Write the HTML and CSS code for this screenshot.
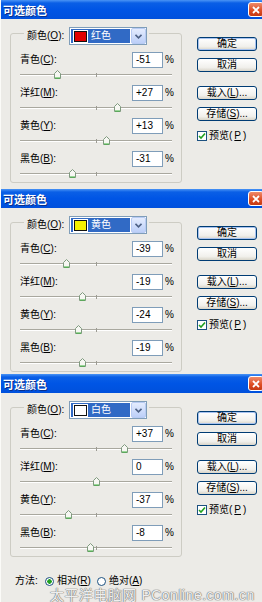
FILE: index.html
```html
<!DOCTYPE html>
<html lang="zh-CN">
<head>
    <meta charset="UTF-8">
    <title>可选颜色</title>
    <link rel="stylesheet" href="styles.css">
</head>
<body>
    <!-- 红色 -->
    <div class="dlg dlg-a">
        <div class="title"><span>可选颜色</span><span class="close"><svg width="8" height="8" viewBox="0 0 8 8"><path d="M1 1 L7 7 M7 1 L1 7" stroke="#fff" stroke-width="1.8"/></svg></span></div>
        <div class="body">
            <fieldset class="group">
                <legend class="pick">
                    <span class="pick-lbl">颜色(<u>O</u>):</span>
                    <span class="select"><span class="cur"><i class="swatch red"></i>红色</span><span class="arrow"><svg width="7" height="5" viewBox="0 0 7 5"><path d="M0.5 0.8 L3.5 3.8 L6.5 0.8" fill="none" stroke="#4d6185" stroke-width="1.6"/></svg></span></span>
                </legend>
                <div class="rows">
                    <div class="row">
                        <div class="line"><span class="lbl">青色(<u>C</u>):</span><span class="num">-51</span><span class="pct">%</span></div>
                        <div class="slider"><div class="track"></div><i class="tick tick-mid"></i><svg class="thumb" style="left:37px" width="7" height="9" viewBox="0 0 7 9"><path d="M0.5 3.5 L3.5 0.5 L6.5 3.5 V8.5 H0.5 Z" fill="#f7f7f3" stroke="#7f9a7f"/><path d="M1 8 H6" stroke="#3cb33c"/></svg></div>
                    </div>
                    <div class="row">
                        <div class="line"><span class="lbl">洋红(<u>M</u>):</span><span class="num">+27</span><span class="pct">%</span></div>
                        <div class="slider"><div class="track"></div><i class="tick tick-mid"></i><svg class="thumb" style="left:97px" width="7" height="9" viewBox="0 0 7 9"><path d="M0.5 3.5 L3.5 0.5 L6.5 3.5 V8.5 H0.5 Z" fill="#f7f7f3" stroke="#7f9a7f"/><path d="M1 8 H6" stroke="#3cb33c"/></svg></div>
                    </div>
                    <div class="row">
                        <div class="line"><span class="lbl">黄色(<u>Y</u>):</span><span class="num">+13</span><span class="pct">%</span></div>
                        <div class="slider"><div class="track"></div><i class="tick tick-mid"></i><svg class="thumb" style="left:86px" width="7" height="9" viewBox="0 0 7 9"><path d="M0.5 3.5 L3.5 0.5 L6.5 3.5 V8.5 H0.5 Z" fill="#f7f7f3" stroke="#7f9a7f"/><path d="M1 8 H6" stroke="#3cb33c"/></svg></div>
                    </div>
                    <div class="row">
                        <div class="line"><span class="lbl">黑色(<u>B</u>):</span><span class="num">-31</span><span class="pct">%</span></div>
                        <div class="slider"><div class="track"></div><i class="tick tick-mid"></i><svg class="thumb" style="left:52px" width="7" height="9" viewBox="0 0 7 9"><path d="M0.5 3.5 L3.5 0.5 L6.5 3.5 V8.5 H0.5 Z" fill="#f7f7f3" stroke="#7f9a7f"/><path d="M1 8 H6" stroke="#3cb33c"/></svg></div>
                    </div>
                </div>
            </fieldset>
            <div class="side">
                <button class="btn btn-ok">确定</button>
                <button class="btn">取消</button>
                <button class="btn btn-gap">载入(<u>L</u>)...</button>
                <button class="btn">存储(<u>S</u>)...</button>
                <label class="check"><span class="box"><svg width="8" height="8" viewBox="0 0 8 8"><path d="M1 4 L3 6 L7 1.5" fill="none" stroke="#21a121" stroke-width="1.6"/></svg></span>预览(<u>P</u>)</label>
            </div>
        </div>
    </div>

    <!-- 黄色 -->
    <div class="dlg dlg-b">
        <div class="title"><span>可选颜色</span><span class="close"><svg width="8" height="8" viewBox="0 0 8 8"><path d="M1 1 L7 7 M7 1 L1 7" stroke="#fff" stroke-width="1.8"/></svg></span></div>
        <div class="body">
            <fieldset class="group">
                <legend class="pick">
                    <span class="pick-lbl">颜色(<u>O</u>):</span>
                    <span class="select"><span class="cur"><i class="swatch yellow"></i>黄色</span><span class="arrow"><svg width="7" height="5" viewBox="0 0 7 5"><path d="M0.5 0.8 L3.5 3.8 L6.5 0.8" fill="none" stroke="#4d6185" stroke-width="1.6"/></svg></span></span>
                </legend>
                <div class="rows">
                    <div class="row">
                        <div class="line"><span class="lbl">青色(<u>C</u>):</span><span class="num">-39</span><span class="pct">%</span></div>
                        <div class="slider"><div class="track"></div><i class="tick tick-mid"></i><svg class="thumb" style="left:46px" width="7" height="9" viewBox="0 0 7 9"><path d="M0.5 3.5 L3.5 0.5 L6.5 3.5 V8.5 H0.5 Z" fill="#f7f7f3" stroke="#7f9a7f"/><path d="M1 8 H6" stroke="#3cb33c"/></svg></div>
                    </div>
                    <div class="row">
                        <div class="line"><span class="lbl">洋红(<u>M</u>):</span><span class="num">-19</span><span class="pct">%</span></div>
                        <div class="slider"><div class="track"></div><i class="tick tick-mid"></i><svg class="thumb" style="left:62px" width="7" height="9" viewBox="0 0 7 9"><path d="M0.5 3.5 L3.5 0.5 L6.5 3.5 V8.5 H0.5 Z" fill="#f7f7f3" stroke="#7f9a7f"/><path d="M1 8 H6" stroke="#3cb33c"/></svg></div>
                    </div>
                    <div class="row">
                        <div class="line"><span class="lbl">黄色(<u>Y</u>):</span><span class="num">-24</span><span class="pct">%</span></div>
                        <div class="slider"><div class="track"></div><i class="tick tick-mid"></i><svg class="thumb" style="left:58px" width="7" height="9" viewBox="0 0 7 9"><path d="M0.5 3.5 L3.5 0.5 L6.5 3.5 V8.5 H0.5 Z" fill="#f7f7f3" stroke="#7f9a7f"/><path d="M1 8 H6" stroke="#3cb33c"/></svg></div>
                    </div>
                    <div class="row">
                        <div class="line"><span class="lbl">黑色(<u>B</u>):</span><span class="num">-19</span><span class="pct">%</span></div>
                        <div class="slider"><div class="track"></div><i class="tick tick-mid"></i><svg class="thumb" style="left:62px" width="7" height="9" viewBox="0 0 7 9"><path d="M0.5 3.5 L3.5 0.5 L6.5 3.5 V8.5 H0.5 Z" fill="#f7f7f3" stroke="#7f9a7f"/><path d="M1 8 H6" stroke="#3cb33c"/></svg></div>
                    </div>
                </div>
            </fieldset>
            <div class="side">
                <button class="btn btn-ok">确定</button>
                <button class="btn">取消</button>
                <button class="btn btn-gap">载入(<u>L</u>)...</button>
                <button class="btn">存储(<u>S</u>)...</button>
                <label class="check"><span class="box"><svg width="8" height="8" viewBox="0 0 8 8"><path d="M1 4 L3 6 L7 1.5" fill="none" stroke="#21a121" stroke-width="1.6"/></svg></span>预览(<u>P</u>)</label>
            </div>
        </div>
    </div>

    <!-- 白色 -->
    <div class="dlg dlg-c">
        <div class="title"><span>可选颜色</span><span class="close"><svg width="8" height="8" viewBox="0 0 8 8"><path d="M1 1 L7 7 M7 1 L1 7" stroke="#fff" stroke-width="1.8"/></svg></span></div>
        <div class="body">
            <fieldset class="group">
                <legend class="pick">
                    <span class="pick-lbl">颜色(<u>O</u>):</span>
                    <span class="select"><span class="cur"><i class="swatch white"></i>白色</span><span class="arrow"><svg width="7" height="5" viewBox="0 0 7 5"><path d="M0.5 0.8 L3.5 3.8 L6.5 0.8" fill="none" stroke="#4d6185" stroke-width="1.6"/></svg></span></span>
                </legend>
                <div class="rows">
                    <div class="row">
                        <div class="line"><span class="lbl">青色(<u>C</u>):</span><span class="num">+37</span><span class="pct">%</span></div>
                        <div class="slider"><div class="track"></div><i class="tick tick-mid"></i><svg class="thumb" style="left:104px" width="7" height="9" viewBox="0 0 7 9"><path d="M0.5 3.5 L3.5 0.5 L6.5 3.5 V8.5 H0.5 Z" fill="#f7f7f3" stroke="#7f9a7f"/><path d="M1 8 H6" stroke="#3cb33c"/></svg></div>
                    </div>
                    <div class="row">
                        <div class="line"><span class="lbl">洋红(<u>M</u>):</span><span class="num">0</span><span class="pct">%</span></div>
                        <div class="slider"><div class="track"></div><i class="tick tick-mid"></i><svg class="thumb" style="left:76px" width="7" height="9" viewBox="0 0 7 9"><path d="M0.5 3.5 L3.5 0.5 L6.5 3.5 V8.5 H0.5 Z" fill="#f7f7f3" stroke="#7f9a7f"/><path d="M1 8 H6" stroke="#3cb33c"/></svg></div>
                    </div>
                    <div class="row">
                        <div class="line"><span class="lbl">黄色(<u>Y</u>):</span><span class="num">-37</span><span class="pct">%</span></div>
                        <div class="slider"><div class="track"></div><i class="tick tick-mid"></i><svg class="thumb" style="left:48px" width="7" height="9" viewBox="0 0 7 9"><path d="M0.5 3.5 L3.5 0.5 L6.5 3.5 V8.5 H0.5 Z" fill="#f7f7f3" stroke="#7f9a7f"/><path d="M1 8 H6" stroke="#3cb33c"/></svg></div>
                    </div>
                    <div class="row">
                        <div class="line"><span class="lbl">黑色(<u>B</u>):</span><span class="num">-8</span><span class="pct">%</span></div>
                        <div class="slider"><div class="track"></div><i class="tick tick-mid"></i><svg class="thumb" style="left:70px" width="7" height="9" viewBox="0 0 7 9"><path d="M0.5 3.5 L3.5 0.5 L6.5 3.5 V8.5 H0.5 Z" fill="#f7f7f3" stroke="#7f9a7f"/><path d="M1 8 H6" stroke="#3cb33c"/></svg></div>
                    </div>
                </div>
            </fieldset>
            <div class="side">
                <button class="btn btn-ok">确定</button>
                <button class="btn">取消</button>
                <button class="btn btn-gap">载入(<u>L</u>)...</button>
                <button class="btn">存储(<u>S</u>)...</button>
                <label class="check"><span class="box"><svg width="8" height="8" viewBox="0 0 8 8"><path d="M1 4 L3 6 L7 1.5" fill="none" stroke="#21a121" stroke-width="1.6"/></svg></span>预览(<u>P</u>)</label>
            </div>
        </div>
        <div class="method">
            <span class="method-lbl">方法:</span>
            <span class="radio on"></span><span class="opt">相对(<u>R</u>)</span>
            <span class="radio"></span><span class="opt">绝对(<u>A</u>)</span>
        </div>
        <div class="mark">太平洋电脑网 PConline.com.cn</div>
    </div>
</body>
</html>
```

FILE: styles.css
```css
* {
    margin: 0;
    padding: 0;
    box-sizing: border-box;
}

body {
    width: 262px;
    height: 602px;
    overflow: hidden;
    background-color: #ecebe7;
    font-family: "Liberation Sans", "Noto Sans CJK SC", sans-serif;
    font-size: 10px;
    line-height: 12px;
    color: #000;
}

u {
    text-decoration: underline;
    text-underline-offset: 1px;
}

.dlg {
    width: 262px;
    overflow: hidden;
    background-color: #ecebe7;
    border-left: 1px solid #fbfbf8;
}

.dlg-a {
    height: 189px;
}

.dlg-b {
    height: 185px;
}

.dlg-c {
    height: 228px;
}

/* title bar */
.title {
    height: 19px;
    display: flex;
    align-items: center;
    justify-content: space-between;
    padding-left: 2px;
    background: linear-gradient(#4a94f5 0, #0a5fe6 3px, #0055e5 50%, #0050dc 100%);
    color: #fff;
    font-family: "Noto Sans CJK SC", sans-serif;
    font-size: 11px;
    font-weight: bold;
    text-shadow: 1px 1px 0 #0a2f8a;
}

.close {
    width: 16px;
    height: 15px;
    margin-right: -2px;
    display: flex;
    align-items: center;
    justify-content: center;
    border: 1px solid #fff;
    border-radius: 3px;
    background: linear-gradient(#ef8a6a, #dd4b22 60%, #c43a14);
}

/* body */
.body {
    display: flex;
    padding: 2px 0 0 9px;
}

.group {
    width: 172px;
    min-inline-size: 0;
    border: 1px solid #cdccc4;
    border-radius: 3px;
}

.pick {
    display: flex;
    align-items: center;
    margin-left: 13px;
    padding: 6px 2px 0 3px;
}

.pick-lbl {
    width: 42px;
}

.select {
    display: flex;
    width: 78px;
    height: 18px;
    border: 1px solid #7f9db9;
    background-color: #fff;
}

.cur {
    flex: 1;
    display: flex;
    align-items: center;
    gap: 4px;
    margin: 1px;
    padding-left: 3px;
    background-color: #316ac5;
    color: #fff;
}

.swatch {
    width: 13px;
    height: 11px;
    border: 1px solid #111;
    box-shadow: 0 0 0 1px #fff;
}

.red {
    background-color: #e10000;
}

.yellow {
    background-color: #f5f000;
}

.white {
    background-color: #fff;
}

.arrow {
    width: 15px;
    display: flex;
    align-items: center;
    justify-content: center;
    border: 1px solid #b8cbf3;
    border-radius: 2px;
    background: linear-gradient(#e4ecfe, #bccff8);
}

/* sliders */
.rows {
    padding-top: 7px;
}

.row {
    padding: 0 8px 0 9px;
}

.row + .row {
    margin-top: 2px;
}

.line {
    display: flex;
    align-items: center;
    height: 16px;
}

.lbl {
    flex: 1;
}

.num {
    width: 31px;
    height: 16px;
    padding-left: 3px;
    border: 1px solid #7f9db9;
    background-color: #fff;
    font-size: 10px;
    line-height: 14px;
}

.pct {
    width: 8px;
    margin-left: 2px;
}

.slider {
    position: relative;
    width: 152px;
    height: 15px;
    padding-top: 6px;
}

.track {
    height: 2px;
    border-top: 1px solid #a9a89f;
    border-bottom: 1px solid #fff;
}

.tick {
    position: absolute;
    top: 5px;
    width: 1px;
    height: 4px;
    background-color: #9c9b93;
}

.tick-mid {
    left: 76px;
}

.thumb {
    position: absolute;
    top: 2px;
    margin-left: -3px;
}

/* buttons */
.side {
    width: 60px;
    margin-left: 15px;
    padding-top: 16px;
    display: flex;
    flex-direction: column;
    align-items: flex-start;
}

.btn {
    width: 60px;
    height: 14px;
    margin-bottom: 7px;
    border: 1px solid #003c74;
    border-radius: 3px;
    background: linear-gradient(#fff, #f1f0ec 70%, #d9d5c9);
    font-family: "Liberation Sans", "Noto Sans CJK SC", sans-serif;
    font-size: 10px;
    line-height: 12px;
    color: #000;
}

.btn-ok {
    box-shadow: inset 0 0 0 1px #a8c3f0;
}

.btn-gap {
    margin-top: 7px;
}

.check {
    display: flex;
    align-items: center;
    gap: 2px;
    margin-top: 2px;
}

.box {
    width: 10px;
    height: 10px;
    display: flex;
    align-items: center;
    justify-content: center;
    border: 1px solid #1c5180;
    background-color: #fff;
}

/* method row */
.method {
    display: flex;
    align-items: center;
    height: 12px;
    margin: 18px 0 0 14px;
}

.method-lbl {
    width: 30px;
}

.radio {
    width: 9px;
    height: 9px;
    margin-right: 3px;
    border: 1px solid #1c5180;
    border-radius: 50%;
    background-color: #fff;
}

.radio.on {
    background: radial-gradient(circle, #21a121 0 2px, #fff 2.5px);
}

.opt {
    width: 40px;
}

.mark {
    margin: 1px 0 0 49px;
    font-family: "Liberation Sans", "Noto Sans CJK SC", sans-serif;
    font-size: 14px;
    line-height: 15px;
    letter-spacing: 0.5px;
    white-space: nowrap;
    color: rgba(255, 255, 255, 0.9);
    text-shadow: 0 0 1px #777, 0 0 1px #777, 0 0 1px #777;
}
```
